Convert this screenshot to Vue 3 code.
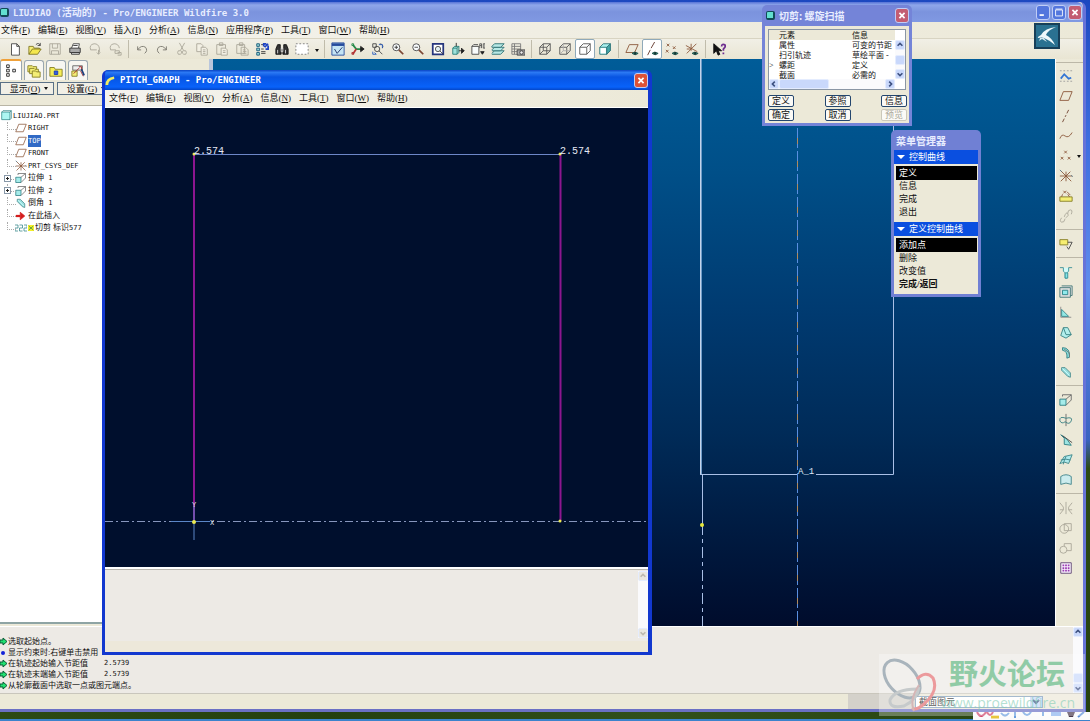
<template>
  <div class="desktop">
    <main class="app-window">
      <header class="titlebar">
        <i class="cube"></i>
        <h1 class="title">
          <span class="latin">LIUJIAO (</span>活动的<span class="latin">) - Pro/ENGINEER Wildfire 3.0</span>
        </h1>
        <button class="win-btn" aria-label="最小化">
          <svg viewBox="0 0 14 14"><path d="M3 10h5" stroke="#fff" stroke-width="2" /></svg>
        </button>
        <button class="win-btn" aria-label="最大化">
          <svg viewBox="0 0 14 14"><path d="M3 4h8v7H3zM3 3h8" fill="none" stroke="#fff" /></svg>
        </button>
        <button class="win-btn close" aria-label="关闭">
          <svg viewBox="0 0 14 14"><path d="M4 4l6 6M10 4l-6 6" stroke="#fff" stroke-width="2" /></svg>
        </button>
      </header>

      <nav class="menubar">
        <button v-for="m in mainMenu" :key="m[0]">{{ m[0] }}(<u>{{ m[1] }}</u>)</button>
      </nav>

      <div class="toolbar">
        <template v-for="(name, i) in topTools" :key="'t' + i">
          <i v-if="name === '|'" class="vsep"></i>
          <button v-else-if="name === 'v'" class="drop" aria-label="更多"></button>
          <button v-else class="tool" :class="{ pressed: pressed.includes(name) }" :aria-label="name">
            <svg viewBox="0 0 16 16" v-html="icons[name]"></svg>
          </button>
        </template>
      </div>

      <!-- 右上角标志 -->
      <svg class="bird" viewBox="0 0 26 26">
        <rect x="1" y="1" width="24" height="24" fill="#2a7191" stroke="#173f59" stroke-width="2" />
        <path d="M22 4Q11 5 7 12Q3 14 4 15Q8 14 10 15Q15 17 21 22Q18 15 12 12Q14 7 22 4Z" fill="#eef8fb" />
        <path d="M6 15l-1 3 3-2 5 3-3-4Z" fill="#d4e8ee" />
      </svg>

      <div class="body">
        <aside class="navigator">
          <div class="tabs">
            <button v-for="(t, i) in ['treeTab', 'folders', 'favorite', 'connect']" :key="t" :class="{ active: i === 0 }" :aria-label="t">
              <svg viewBox="0 0 16 16" v-html="icons[t]"></svg>
            </button>
          </div>
          <div class="tree-actions">
            <button><span>显示(<u>O</u>)</span><i class="tri"></i></button>
            <button><span>设置(<u>G</u>)</span><i class="tri"></i></button>
          </div>
          <ul class="tree">
            <li v-for="(n, i) in tree" :key="i" :class="{ root: i === 0, sel: n.sel }">
              <i v-if="n.plus" class="plus"></i>
              <svg viewBox="0 0 16 16" v-html="icons[n.icon]"></svg>
              <svg v-if="n.mark" class="mark" viewBox="0 0 8 8"><path d="M0 0h8v8H0z" fill="#f4ef28" /><path d="M1 1l6 6M7 1L1 7M2 4h4" stroke="#594" /></svg>
              <span class="label">{{ n.cjk }}<span class="latin">{{ n.text }}</span></span>
            </li>
          </ul>
        </aside>

        <section class="viewport">
          <svg class="scene">
            <g stroke="#a9bfe6" fill="none">
              <path d="M488 0V415" stroke="#6f9cc8" stroke-width="2" />
              <path d="M487.500 0V415" stroke="#c3d3ea" />
              <path d="M487 415.500H584M603 415.500H680.500V0" />
              <path d="M489.500 416V476" />
              <path d="M489.500 480V567" stroke-dasharray="4 4 11 4" />
            </g>
            <path d="M584.500 0V567" stroke="#5a8fe0" stroke-dasharray="20 3" />
            <path d="M584.500 10V567" stroke="#b08a5c" stroke-dasharray="6 17" />
            <circle cx="489" cy="466" r="2" fill="#e6e83c" />
            <text x="585" y="415" class="scene-text">A_1</text>
          </svg>
        </section>

        <div class="side-tools">
          <template v-for="(name, i) in sideTools" :key="'s' + i">
            <i v-if="name === '|'" class="hsep"></i>
            <button v-else class="tool" :aria-label="name">
              <svg viewBox="0 0 16 16" v-html="icons[name]"></svg>
              <i v-if="name === 'points'" class="tri small"></i>
            </button>
          </template>
        </div>
      </div>

      <section class="messages">
        <ul>
          <li v-for="(m, i) in messages" :key="i">
            <svg v-if="m.kind === 'arrow'" viewBox="0 0 8 9"><path d="M0 3h3V1l4 3.500L3 8V6H0z" fill="#20e070" stroke="#075c34" /></svg>
            <svg v-else viewBox="0 0 8 9"><circle cx="3" cy="5" r="2" fill="#1222d8" /></svg>
            <span>{{ m.text }}</span><span v-if="m.value" class="latin value">{{ m.value }}</span>
          </li>
        </ul>
        <div class="scroll-v">
          <button aria-label="上"><svg viewBox="0 0 10 10"><path d="M2 6l3-3 3 3" /></svg></button>
          <i class="thumb"></i>
          <button aria-label="下"><svg viewBox="0 0 10 10"><path d="M2 4l3 3 3-3" /></svg></button>
        </div>
      </section>

      <footer class="status">
        <i class="status-box"></i>
        <label class="filter">
          <select aria-label="过滤器"><option>截面图元</option></select>
          <svg viewBox="0 0 12 10"><path d="M3 3l3 3 3-3" /></svg>
        </label>
      </footer>
    </main>

    <!-- 螺距图窗口 -->
    <section class="graph-window">
      <header>
        <svg class="arc" viewBox="0 0 12 12"><path d="M2 11Q2 4 10 3" fill="none" stroke="#f4ec62" stroke-width="3" /></svg>
        <h2 class="latin">PITCH_GRAPH - Pro/ENGINEER</h2>
        <button class="win-btn close" aria-label="关闭">
          <svg viewBox="0 0 14 14"><path d="M4 4l6 6M10 4l-6 6" stroke="#fff" stroke-width="2" /></svg>
        </button>
      </header>
      <nav class="menubar">
        <button v-for="m in graphMenu" :key="m[0]">{{ m[0] }}(<u>{{ m[1] }}</u>)</button>
      </nav>
      <svg class="graph">
        <path d="M0 413.500H543" stroke="#8796bd" stroke-dasharray="8 3 2 3" />
        <path d="M89 46.500H455" stroke="#6d87c8" />
        <path d="M89 46V413M455.500 46V413" stroke="#8c1690" stroke-width="2" />
        <path d="M89 398V432M66 413.500H105" stroke="#5a86c8" />
        <g fill="#eaea50">
          <circle cx="89" cy="46" r="1.500" /><circle cx="455" cy="46" r="1.500" />
          <circle cx="89" cy="414" r="2" /><circle cx="455" cy="413" r="1.500" />
        </g>
        <text x="89" y="46">2.574</text>
        <text x="455" y="46">2.574</text>
        <text x="105" y="417" class="axis">X</text>
        <text x="87" y="399" class="axis">Y</text>
      </svg>
      <div class="graph-log">
        <div class="scroll-v off">
          <button disabled aria-label="上"><svg viewBox="0 0 10 10"><path d="M2 6l3-3 3 3" /></svg></button>
          <button disabled aria-label="下"><svg viewBox="0 0 10 10"><path d="M2 4l3 3 3-3" /></svg></button>
        </div>
      </div>
      <div class="graph-foot"></div>
    </section>

    <!-- 切剪对话框 -->
    <section class="dialog">
      <header>
        <i class="cube"></i>
        <h2>切剪: 螺旋扫描</h2>
        <button class="win-btn close" aria-label="关闭">
          <svg viewBox="0 0 14 14"><path d="M4 4l6 6M10 4l-6 6" stroke="#fff" stroke-width="2" /></svg>
        </button>
      </header>
      <div class="dialog-body">
        <div class="list">
          <table>
            <thead><tr><th></th><th>元素</th><th>信息</th></tr></thead>
            <tbody>
              <tr v-for="e in elements" :key="e[0]">
                <td>{{ e[2] }}</td><td>{{ e[0] }}</td><td>{{ e[1] }}</td>
              </tr>
            </tbody>
          </table>
          <div class="scroll-v">
            <button aria-label="上"><svg viewBox="0 0 10 10"><path d="M2 6l3-3 3 3" /></svg></button>
            <i class="thumb"></i>
            <button aria-label="下"><svg viewBox="0 0 10 10"><path d="M2 4l3 3 3-3" /></svg></button>
          </div>
          <div class="scroll-h">
            <button aria-label="左"><svg viewBox="0 0 10 10"><path d="M6 2L3 5l3 3" /></svg></button>
            <i class="thumb"></i>
            <button aria-label="右"><svg viewBox="0 0 10 10"><path d="M4 2l3 3-3 3" /></svg></button>
          </div>
        </div>
        <div class="dialog-btns">
          <button v-for="b in ['定义', '参照', '信息', '确定', '取消', '预览']" :key="b" :disabled="b === '预览'">{{ b }}</button>
        </div>
      </div>
    </section>

    <!-- 菜单管理器 -->
    <section class="menu-manager">
      <h2>菜单管理器</h2>
      <div v-for="g in managerGroups" :key="g.title" class="group">
        <h3><i></i>{{ g.title }}</h3>
        <button v-for="(item, i) in g.items" :key="item" :class="{ on: i === 0, strong: item === '完成/返回' }">{{ item }}</button>
      </div>
    </section>

    <div class="tray">
      <svg viewBox="0 0 116 8">
        <path d="M4 0q4 8 9 0M14 0q3 6 6 0" fill="none" stroke="#d0486c" stroke-width="2" />
        <path d="M18 5h8" stroke="#e8c63c" stroke-width="3" />
        <path d="M28 1q4 5 8 0M42 0v6M50 0q4 6 8 0M70 0v4" fill="none" stroke="#6b9fdf" stroke-width="2" />
        <path d="M78 0h10v4H78z" fill="#8bb4ee" />
        <path d="M94 0h8l-2 5h-4z" fill="#4b3a4b" />
        <path d="M105 5l6-5" stroke="#5b8ed8" stroke-width="2" />
      </svg>
    </div>

    <div class="watermark">
      <svg viewBox="0 0 60 56">
        <g fill="none">
          <ellipse cx="23" cy="22" rx="14" ry="22" transform="rotate(-42 23 22)" stroke="#a9b4bc" stroke-width="3" />
          <path d="M38 22Q47 13 54 21Q60 34 45 47Q37 54 33 51" stroke="#ec9a9c" stroke-width="3" />
          <path d="M38 32Q16 32 11 43Q10 52 25 49Q38 43 40 30" stroke="#c6cacb" stroke-width="3" />
          <path d="M40 28Q30 43 35 54" stroke="#d5b6b6" stroke-width="2" />
        </g>
      </svg>
      <div class="wm-text">
        <strong>野火论坛</strong>
        <span>www.proewildfire.cn</span>
      </div>
    </div>
  </div>
</template>

<script setup>
const mainMenu = [
  ['文件', 'F'], ['编辑', 'E'], ['视图', 'V'], ['插入', 'I'], ['分析', 'A'],
  ['信息', 'N'], ['应用程序', 'P'], ['工具', 'T'], ['窗口', 'W'], ['帮助', 'H'],
]
const graphMenu = [
  ['文件', 'F'], ['编辑', 'E'], ['视图', 'V'], ['分析', 'A'],
  ['信息', 'N'], ['工具', 'T'], ['窗口', 'W'], ['帮助', 'H'],
]

const topTools = [
  'new', 'open', 'save', 'print', 'mail', 'mailLink', '|',
  'undo', 'redo', 'cut', 'copy', 'paste', 'pasteSpecial', 'regen', 'find', 'select', 'v', '|',
  'repaint', 'spin', 'orient', 'zoomIn', 'zoomOut', 'refit', 'reorient', 'views', 'layers', 'viewMgr', '|',
  'wire', 'hidden', 'noHidden', 'shade', '|',
  'planeEye', 'axisEye', 'pointEye', 'csysEye', '|', 'help',
]
const pressed = ['noHidden', 'axisEye']

const sideTools = [
  'sketch', 'plane', 'axis', 'curve', 'points', 'csys', 'analysis', 'link', '|',
  'note', '|',
  'hole', 'shell', 'rib', 'draft', 'round', 'chamfer', '|',
  'extrude', 'revolve', 'sweep', 'blend', 'style', '|',
  'mirror', 'merge', 'trim', 'pattern',
]

const tree = [
  { icon: 'part', text: 'LIUJIAO.PRT' },
  { icon: 'plane', text: 'RIGHT' },
  { icon: 'plane', text: 'TOP', sel: true },
  { icon: 'plane', text: 'FRONT' },
  { icon: 'csys', text: 'PRT_CSYS_DEF' },
  { icon: 'extrude', cjk: '拉伸', text: ' 1', plus: true },
  { icon: 'extrude', cjk: '拉伸', text: ' 2', plus: true },
  { icon: 'chamfer', cjk: '倒角', text: ' 1' },
  { icon: 'insert', cjk: '在此插入' },
  { icon: 'helix', cjk: '切剪 标识', text: '577', mark: true },
]

const messages = [
  { kind: 'arrow', text: '选取起始点。' },
  { kind: 'dot', text: '显示约束时:右键单击禁用' },
  { kind: 'arrow', text: '在轨迹起始输入节距值', value: '2.5739' },
  { kind: 'arrow', text: '在轨迹末端输入节距值', value: '2.5739' },
  { kind: 'arrow', text: '从轮廓截面中选取一点或图元端点。' },
]

const elements = [
  ['属性', '可变的节距', ''],
  ['扫引轨迹', '草绘平面 -', ''],
  ['螺距', '定义', '>'],
  ['截面', '必需的', ''],
]

const managerGroups = [
  { title: '控制曲线', items: ['定义', '信息', '完成', '退出'] },
  { title: '定义控制曲线', items: ['添加点', '删除', '改变值', '完成/返回'] },
]

// 小工具: 描边路径
const p = (d, stroke = '#333', fill = 'none', w = 1) =>
  `<path d="${d}" stroke="${stroke}" fill="${fill}" stroke-width="${w}"/>`

const eye = p('M8 13q3-3 7 0q-3 3-7 0z', '#24524c', '#3f8a80') + p('M11 12h1v2h-1z', '#12302c')
const cubeLines = 'M2 6h8v8H2zM2 6l4-4h8v8l-4 4M10 6l4-4'
const brown = '#8a5638'
const gray = '#a9a698'

// 16x16 图标
const icons = {
  new: p('M4 2h6l3 3v10H4zM10 2v3h3', '#444', '#fff'),
  open: p('M1 14V5h5l1 2h6v2', '#7d7420', '#f6ee76') + p('M1 14l4-6h10l-4 6z', '#7d7420', '#f4e74c') + p('M9 3q3-3 5 1M14 1v3h-3', '#444'),
  save: p('M2 2h12v12H2zM5 2v5h6V2M4 14v-4h8v4', gray),
  print: p('M4 7l2-5h7l-1 5', '#444', '#fff') + p('M2 7h12v5H2z', '#333', '#aaa') + p('M4 12h9v2H4zM6 4h5', '#333', '#ddd'),
  mail: p('M3 9Q1 3 7 2q5 0 6 5v5M3 9h7M12 9v5l2-2M10 12l2 2', gray),
  mailLink: p('M3 9Q1 3 7 2q5 0 6 5M3 9h6M8 10h5v3H8zM11 12h4v3h-4', gray),
  undo: p('M3 5v4h4M3 9q4-6 9-3q3 4-1 7', '#77756c'),
  redo: p('M13 5v4H9M13 9Q9 3 4 6q-3 4 1 7', '#77756c'),
  cut: p('M5 1l5 9M11 1L6 10M6 10q-3-1-3 2t3 2t1-4M10 10q3-1 3 2t-3 2t-1-4', gray),
  copy: p('M2 2h5l2 2v7H2z', gray, '#f3f0e4') + p('M7 6h5l2 2v7H7zM9 9h3M9 11h3M9 13h3', gray, '#f3f0e4'),
  paste: p('M2 3h10v11H2zM5 1h4v3H5z', gray) + p('M7 7h5l2 2v6H7zM9 10h3M9 12h3', gray, '#f3f0e4'),
  pasteSpecial: p('M2 3h9v10H2zM5 1h4v3H5zM7 6h5l3 3v6H7z', gray) + p('M9 9h3M9 11h4M9 13h4', gray),
  regen: p('M2 2h3v3H2zM2 7h3v3H2zM2 12h3v3H2z', '#157', '#9fe0dc') + p('M7 3h3M7 8h3M7 13h5M7 11h5', '#333') + p('M10 5V2h3M15 4v4h-3M11 6l4-4', '#1d43c4', 'none', 2),
  find: p('M3 3h3v4l1 1v6H1V8zM10 3h3l2 5v6H9V8l1-1z', '#111', '#333') + p('M7 7h2v4H7zM3 9v4M12 9v4', '#ddd'),
  select: '<path d="M1 2h14v12H1z" fill="#fff" stroke="#777" stroke-dasharray="2 2"/>',
  repaint: p('M1 1h14v14H1z', '#254a9c', '#c4e4f4', 1) + p('M1 3h14', '#254a9c', 'none', 3) + p('M4 8l3 5 6-7', '#1b2b66', 'none', 1),
  spin: p('M2 3l4 5h6', '#258a48', 'none', 2) + p('M2 14l4-6', '#b33', 'none', 2) + p('M11 5l4 3-4 3z', '#222', '#222') + p('M1 2h2v2H1z', '#258a48') + p('M1 12h2v2H1z', '#a33'),
  orient: p('M2 2h4v4H2zM10 2q5 1 3 5M4 8a3 3 0 1 0 6 0a3 3 0 1 0-6 0M9 10l4 4', '#444') + p('M9 3h4v4M2 11v3h4M4 12l2 2', '#2357bd', 'none', 1),
  zoomIn: p('M2 6a4 4 0 1 0 8 0a4 4 0 1 0-8 0', '#444', '#f8fbfd') + p('M4 6h4M6 4v4', '#333') + p('M9 9l5 5', '#7b4634', 'none', 2),
  zoomOut: p('M2 6a4 4 0 1 0 8 0a4 4 0 1 0-8 0M4 6h4', '#444', '#f8fbfd') + p('M9 9l5 5', '#7b4634', 'none', 2),
  refit: p('M2 2h12v12H2z', '#26357c', '#fff', 2) + p('M5 8a3 3 0 1 0 6 0a3 3 0 1 0-6 0M10 10l4 4', '#444', '#e1eef2'),
  reorient: p('M2 7h5v7H2zM2 7l2-2h5l-2 2M7 14l2-2V5', '#267a76', '#9de3dc') + p('M6 1v4M9 10h6', '#222') + p('M12 7l3 3-3 3z', '#222', '#222'),
  views: p('M1 5h8v9H1zM1 5l2-2h5', '#444', '#f8fbfb') + p('M10 7V2h2v5M10 4h2M14 2v5M14 2h2v5h-2', '#555') + p('M11 11l2 3 2-3z', '#222', '#222'),
  layers: p('M1 13l3-3h11l-4 4H1', '#276d70', '#b8e9e6') + p('M1 9l3-3h11l-4 4H1', '#276d70', '#b8e9e6') + p('M1 5l3-3h11l-4 4H1z', '#276d70', '#b8e9e6'),
  viewMgr: p('M1 2h10v12H1zM1 5h10M4 2v12M1 8h10M1 11h10', '#777') + p('M7 9h9v6H7z', '#444', '#aaa') + p('M10 12a2 2 0 1 0 4 0a2 2 0 1 0-4 0', '#333', '#eee'),
  wire: p(cubeLines + 'M6 2v8h8M6 10l-4 4', '#555'),
  hidden: p(cubeLines, '#555') + p('M6 2v8h8M6 10l-4 4', '#aaa'),
  noHidden: p(cubeLines, '#555', '#fff'),
  shade: p(cubeLines, '#2f7478', '#a9f0ee') + p('M3 7h6v6H3z', 'none', '#fff') + p('M10 6l4-4v8l-4 4z', '#2f7478', '#42a6a8'),
  planeEye: p('M1 12L5 3h10l-4 9z', brown) + eye,
  axisEye: p('M3 15l3-6M7 7l4-7', '#5c2f22', 'none', 1) + eye,
  pointEye: p('M2 2l3 3M5 2L2 5M1 9l3 3M4 9l-3 3M9 5l3 3M12 5L9 8', brown) + eye,
  csysEye: p('M1 4l13 7M13 2L2 13M7 8L2 8M7 2v8', brown) + eye,
  help: p('M2 2v11l3-3 2 5 2-1-2-4h4z', '#111', '#111') + p('M11 5q0-3 3-2t-1 5v2M13 12v2', '#6e2e8f', 'none', 2),

  treeTab: p('M3 1h3v3H3zM3 6h3v3H3zM3 11h3v3H3zM10 6h3v3h-3z', '#222', '#fff'),
  folders: p('M1 2h5l1 1h4v6H1z', '#837b22', '#f4ee75') + p('M3 5h5l1 1h4v5H3z', '#837b22', '#f4ee75') + p('M6 8h4l1 1h4v6H6z', '#837b22', '#f4ee75'),
  favorite: p('M1 4h5l1 2h8v8H1z', '#837b22', '#f5ee59') + p('M6 8h4v4H6z', '#1b3bb4', '#3560df'),
  connect: p('M2 2h11v5H2z', '#666', '#eee') + p('M1 8h6v6H1z', '#837b22', '#f4ee75') + p('M3 11l7-7M9 3h3v4M11 8l3 6', '#a3282c', 'none', 1) + p('M12 6l3 7', '#1c3f7c', 'none', 2),

  part: p('M1 3h12v11H1z', '#207a7d', '#adf6f2', 1) + p('M1 3l2-2h12v11l-2 2M13 3l2-2', '#207a7d'),
  insert: p('M1 8h6', '#d41c1c', 'none', 3) + p('M7 3l6 5-6 5z', '#d41c1c', '#d41c1c'),
  helix: p('M0 4h4v4H0v4h4M6 4h4v4H6v4h4M12 4h4v4h-4v4h4', '#34868a'),
  sketch: '<path d="M1 2h14M1 14h14" stroke="#999" stroke-dasharray="2 2"/>' + p('M2 11l4-5 5 5 3-1', '#3375d5', 'none', 2),
  plane: p('M1 13L5 3h10l-4 10z', brown, 'none', 1),
  axis: p('M4 15l2-4M7 9l1-2M9 5l2-4', '#6c3d2a', 'none', 1),
  curve: p('M1 11q2-6 6-3t8-4', brown, 'none', 1),
  points: p('M6 2l3 3M9 2L6 5M2 9l3 3M5 9l-3 3M10 9l3 3M13 9l-3 3', brown),
  csys: p('M2 2l12 12M13 3L2 14M1 8h14M8 3v11', brown) + p('M1 1l2 2M14 7l2 2', '#578'),
  analysis: p('M5 2l3 3M8 2L5 5M9 3l4 4', brown) + p('M1 9h14v5H1z', '#837b22', '#f4ee75') + p('M4 6l-1 3M10 6l2 3', brown),
  link: p('M3 10q-3 4 0 5t4-4M6 9q2-6 4-4t-2 5M10 5q0-4 3-4t1 5', gray, 'none', 1),
  note: p('M1 3h9v6H1z', '#837b22', '#f6ee70') + p('M10 6h5l-4 8M11 14l-2-3', '#444'),
  hole: p('M1 3h4v4l2 2v6h2V9l2-2V3h4', '#358f96', '#d0fbfb') + p('M7 9h3v6H7z', '#358f96', '#84e5e8'),
  shell: p('M1 3h12v11H1zM3 1h12v11h-2', '#477', '#ddd') + p('M4 6h6v5H4z', '#268087', '#8feaec'),
  rib: p('M2 2v12h12', '#888') + p('M3 5l8 8H3z', '#338288', '#94e8e5'),
  draft: p('M2 12l3-9h5l4 8-6 4z', '#337f80', '#b2eeec') + p('M5 3l3 8 6 0', '#337f80'),
  round: p('M4 3q9 0 8 11l-3 1Q10 7 4 6z', '#357f82', '#83dbda') + p('M6 5q7 3 6 9', '#777'),
  chamfer: p('M3 3h4l6 6v5l-3-1L3 6z', '#47898b', '#98dddd') + p('M4 4l8 8', '#cff'),
  extrude: p('M1 7h7v7H1z', '#287b80', '#a5ecea') + p('M8 7l6-5v6l-6 6M4 4V2h10', '#666'),
  revolve: p('M8 1v14', '#666') + p('M8 6Q0 3 1 9q2 4 6 1M8 6q8-2 6 3t-7 1', '#347e80', 'none', 1),
  sweep: p('M2 2l4 4v7l8 1-5-7-7-5z', '#287b80', '#9ce4e2') + p('M4 3l11 8', '#444'),
  blend: p('M1 12l5-8 9-2-4 10q-4-3-10 0z', '#388487', '#afeaec') + p('M8 4q-3 6-3 9M2 8q6-2 11 0', '#388487'),
  style: p('M2 13V4q6-4 12 0v9q-6-3-12 0z', '#398088', '#ccecee'),
  mirror: p('M8 1v14M1 2l4 5v3l-4 5M15 2l-4 5v3l4 5M1 10h4M11 10h4', gray),
  merge: p('M1 9a5 5 0 1 0 10 0a5 5 0 1 0-10 0M6 3h8v8H6z', gray),
  trim: p('M6 3h8v8H6z', gray) + p('M1 10a4 4 0 1 0 8 0a4 4 0 1 0-8 0', gray, '#ece9d8'),
  pattern: p('M2 2h12v12H2z', '#5c4270', '#faf3ff', 1) + '<path d="M4 5h9M4 8h9M4 11h9" stroke="#9a3db1" stroke-width="2" stroke-dasharray="2 1"/>',
}
</script>

<style>
body {
  margin: 0;
  overflow: hidden;
}
</style>

<style scoped>
* {
  box-sizing: border-box;
}

h1, h2, h3, ul {
  margin: 0;
  padding: 0;
  list-style: none;
}

button, select {
  font: inherit;
  color: inherit;
  background: none;
  border: 0;
  padding: 0;
  margin: 0;
  white-space: nowrap;
}

svg {
  display: block;
  flex: none;
}

.desktop {
  position: relative;
  height: 100vh;
  padding: 2px 4px 9px 0;
  color: #111;
  font: 9px/12px "Liberation Serif", "Noto Sans CJK SC", sans-serif;
  background:
    linear-gradient(#3b83cc, #3b83cc) bottom / 100% 2px no-repeat,
    linear-gradient(90deg, #2c4a14, #24400f 30%, #31501b 60%, #27430f) bottom / 100% 9px no-repeat,
    linear-gradient(#1c48c0, #3f6fe0 20%, #5f8cec 40%, #3a62c0 61%, #2c4a14 65%, #24400f);
}

.latin {
  font-family: "DejaVu Sans Mono", monospace;
}

/* ---- 主窗口 ---- */
.app-window {
  position: relative;
  display: flex;
  flex-direction: column;
  height: 100%;
  background: #ece9d8;
  border-right: 3px solid #6673d8;
  border-bottom: 3px solid #6a70c4;
  border-radius: 0 6px 0 0;
}

.titlebar {
  display: flex;
  align-items: center;
  gap: 2px;
  height: 20px;
  padding-right: 1px;
  color: #e8edff;
  background: linear-gradient(#5673d6, #8ea6ea 15%, #7b93dd 50%, #8099e2);
  border-radius: 0 6px 0 0;
}

.title {
  flex: 1;
  margin-left: 2px;
  font: bold 10px/14px "Noto Sans CJK SC", sans-serif;
  white-space: nowrap;
}

.title .latin {
  font-size: 9px;
}

.cube {
  width: 9px;
  height: 9px;
  background: #62dfd0;
  border: 1px solid #124a58;
  border-width: 1px 2px 2px 1px;
  border-radius: 2px;
}

.win-btn {
  width: 14px;
  height: 15px;
  background: #5376dd;
  border: 1px solid #c0cdf6;
  border-radius: 3px;
}

.win-btn svg {
  width: 12px;
  height: 13px;
}

.win-btn.close {
  background: #c35d72;
}

.menubar {
  display: flex;
  align-items: center;
  gap: 8px;
  height: 16px;
  padding-left: 1px;
  font-family: "Liberation Serif", "Noto Sans CJK SC", serif;
  background: linear-gradient(90deg, #f4f3ee, #ece9d8);
}

.toolbar {
  display: flex;
  align-items: center;
  height: 21px;
  padding-left: 5px;
  border-top: 1px solid #d8d4c2;
  background: linear-gradient(#f1efe6, #e9e5d3);
}

.tool {
  display: flex;
  align-items: center;
  justify-content: center;
  width: 20px;
  height: 20px;
}

.tool svg {
  width: 14px;
  height: 14px;
}

.tool.pressed {
  background: #fff;
  border: 1px solid #8fa9b9;
  border-radius: 2px;
}

.vsep {
  width: 7px;
  height: 18px;
  background: linear-gradient(90deg, transparent 3px, #c0bcab 3px, #c0bcab 4px, transparent 4px);
}

.drop {
  width: 9px;
  height: 20px;
}

.drop::after, .tri {
  content: "";
  display: inline-block;
  border: 2px solid transparent;
  border-top: 3px solid #111;
  border-bottom: 0;
}

.bird {
  position: absolute;
  top: 21px;
  right: 23px;
  width: 26px;
  height: 26px;
}

.body {
  display: flex;
  flex: 1;
  min-height: 0;
}

/* ---- 导航器 ---- */
.navigator {
  display: flex;
  flex-direction: column;
  width: 213px;
  border-right: 4px solid #b9c6dc;
  border-bottom: 2px solid #8ea4a4;
  margin-bottom: 2px;
}

.tabs {
  display: flex;
  gap: 2px;
  height: 21px;
}

.tabs button {
  display: flex;
  align-items: center;
  justify-content: center;
  width: 20px;
  height: 20px;
  margin-top: 1px;
  background: #f7f6f1;
  border: 1px solid #9aa7b0;
  border-bottom: 0;
  border-radius: 3px 3px 0 0;
}

.tabs button.active {
  width: 22px;
  height: 21px;
  margin-top: 0;
  background: #fff;
  border-top: 2px solid #efa039;
}

.tabs svg {
  width: 14px;
  height: 14px;
}

.tree-actions {
  display: flex;
  gap: 3px;
  padding-top: 2px;
  height: 26px;
  border-bottom: 1px solid #b9b5a5;
}

.tree-actions button {
  display: flex;
  align-items: center;
  justify-content: center;
  gap: 4px;
  width: 54px;
  height: 13px;
  padding-left: 4px;
  background: #f1efe6;
  border: 1px solid #5a7187;
}

.tree {
  flex: 1;
  padding: 3px 0 0;
  font-size: 8px;
  background: #fff;
}

.tree li {
  position: relative;
  display: flex;
  align-items: center;
  gap: 1px;
  height: 12px;
  padding-left: 15px;
  white-space: pre;
}

.tree li:nth-child(odd) {
  height: 13px;
}

.tree li.root {
  padding-left: 1px;
}

.tree li:not(.root)::before {
  content: "";
  position: absolute;
  left: 7px;
  top: 0;
  width: 8px;
  height: 7px;
  border-left: 1px dotted #aaa;
  border-bottom: 1px dotted #aaa;
}

.tree svg {
  width: 12px;
  height: 12px;
}

.tree .root svg {
  width: 11px;
  height: 11px;
}

.tree svg.mark {
  width: 6px;
  height: 6px;
}

.tree .latin {
  font-size: 7px;
}

.tree .sel .label {
  color: #fff;
  line-height: 11px;
  background: #316ac5;
}

.plus {
  position: absolute;
  left: 4px;
  top: 3px;
  width: 7px;
  height: 7px;
  border: 1px solid #8898a8;
  background: linear-gradient(#222, #222) center / 3px 1px no-repeat, linear-gradient(#222, #222) center / 1px 3px no-repeat, #fff;
}

/* ---- 图形区 ---- */
.viewport {
  flex: 1;
  background: linear-gradient(#005c98, #004f88 20%, #003a70 45%, #002b58 66%, #001a40 84%, #000c2c);
}

.scene {
  width: 100%;
  height: 100%;
}

.scene-text {
  font: 9px "Liberation Mono", monospace;
  fill: #dfe8f6;
}

.side-tools {
  width: 28px;
  padding-top: 7px;
  border-left: 1px solid #fff;
  background: linear-gradient(#bbb7a7, #bbb7a7) 0 3px / 100% 1px no-repeat;
}

.side-tools .tool {
  position: relative;
}

.side-tools .tri.small {
  position: absolute;
  left: 21px;
  top: 9px;
}

.hsep {
  display: block;
  height: 8px;
  background: linear-gradient(#bbb7a7, #bbb7a7) 0 3px / 100% 1px no-repeat;
}

/* ---- 消息区 ---- */
.messages {
  display: flex;
  justify-content: space-between;
  height: 67px;
  background: #edeae5;
  border-top: 1px solid #fff;
  font-size: 8px;
}

.messages ul {
  padding-top: 9px;
}

.messages li {
  display: flex;
  align-items: center;
  height: 11px;
  line-height: 11px;
}

.messages li svg {
  width: 8px;
  height: 9px;
}

.messages .value {
  margin-left: 16px;
  font-size: 7px;
}

.scroll-v, .scroll-h {
  display: flex;
  justify-content: space-between;
  background: #fafafc;
}

.scroll-v {
  flex-direction: column;
  width: 10px;
}

.scroll-v button, .scroll-h button, .thumb {
  width: 10px;
  height: 10px;
  background: #c9d8fb;
  border: 1px solid #e4ecfe;
  border-radius: 2px;
}

.scroll-v svg, .scroll-h svg, .filter svg {
  width: 8px;
  height: 8px;
  fill: none;
  stroke: #3c5080;
  stroke-width: 2;
}

.scroll-v .thumb {
  margin-top: auto;
}

.scroll-v.off button {
  background: #e9e7e0;
}

.scroll-v.off svg {
  stroke: #bcb8ae;
}

.status {
  display: flex;
  align-items: center;
  justify-content: flex-end;
  height: 16px;
  padding-right: 40px;
  border-top: 1px solid #c9c6bc;
}

.status-box {
  width: 67px;
  height: 15px;
  background: #d4d1ca;
}

.filter {
  display: flex;
  align-items: center;
  width: 128px;
  height: 12px;
  background: #fff;
  border: 1px solid #7f9db9;
}

.filter select {
  flex: 1;
  height: 10px;
  padding-left: 3px;
  appearance: none;
  line-height: 10px;
}

.filter svg {
  width: 12px;
  height: 10px;
  background: #c9d8fb;
}

/* ---- 螺距图窗口 ---- */
.graph-window {
  position: absolute;
  left: 102px;
  top: 70px;
  display: flex;
  flex-direction: column;
  width: 550px;
  border: 3px solid #1238cf;
  border-top: 0;
  border-right-width: 4px;
  border-radius: 6px 6px 0 0;
  background: #1238cf;
}

.graph-window header {
  display: flex;
  align-items: center;
  gap: 2px;
  height: 20px;
  color: #fff;
  background: linear-gradient(#0a43c4, #2b79f4 12%, #0754e2 35%, #0862fa 85%, #0446c8);
  border-radius: 4px 4px 0 0;
}

.graph-window h2 {
  flex: 1;
  margin-left: 2px;
  font-size: 9px;
  line-height: 14px;
}

.graph-window .arc {
  width: 11px;
  height: 11px;
}

.graph-window .win-btn.close {
  background: #de5236;
}

.graph-window .menubar {
  height: 18px;
  padding: 0 0 2px 4px;
  border-bottom: 1px solid #fff;
}

.graph {
  width: 100%;
  height: 459px;
  background: #000f2d;
}

.graph text {
  font: 10px "Liberation Mono", monospace;
  fill: #e6e9f4;
}

.graph text.axis {
  font-size: 7px;
}

.graph-log {
  display: flex;
  justify-content: flex-end;
  height: 74px;
  padding: 2px 0 3px;
  border-top: 2px solid #fff;
  background: linear-gradient(#b9b6ae, #b9b6ae) top / 100% 1px no-repeat, #edeae5;
}

.graph-foot {
  height: 11px;
  background: #ede8da;
}

/* ---- 切剪对话框 ---- */
.dialog {
  position: absolute;
  right: 178px;
  top: 5px;
  width: 150px;
  padding: 0 3px 3px;
  background: #7484d8;
  border-radius: 5px 5px 0 0;
}

.dialog header {
  display: flex;
  align-items: center;
  gap: 4px;
  height: 21px;
  padding-left: 1px;
  color: #e8edff;
}

.dialog h2 {
  flex: 1;
  font: bold 10px/14px "Noto Sans CJK SC", sans-serif;
}

.dialog-body {
  padding: 3px 2px 2px 3px;
  background: #ece9d8;
}

.list {
  display: grid;
  grid-template-columns: 1fr 10px;
  grid-template-rows: 49px 10px;
  width: 138px;
  border: 1px solid #8a96a4;
  background: #fff;
}

.list table {
  width: 100%;
  table-layout: fixed;
  border-collapse: collapse;
  font-size: 8px;
  line-height: 10px;
  overflow: hidden;
}

.list th, .list td {
  height: 10px;
  padding: 0;
  font-weight: normal;
  text-align: left;
  white-space: nowrap;
  line-height: 9px;
}

.list th {
  background: #ece9d8;
}

.list th:first-child {
  width: 10px;
}

.list th:nth-child(2) {
  width: 73px;
}

.list .scroll-v {
  margin-top: 10px;
}

.list .scroll-v .thumb {
  margin: auto 0;
}

.list .scroll-h .thumb {
  width: 50px;
  margin-right: auto;
}

.dialog-btns {
  display: grid;
  grid-template-columns: repeat(3, 26px);
  justify-content: space-between;
  gap: 2px;
  padding-top: 5px;
}

.dialog-btns button {
  height: 12px;
  line-height: 10px;
  background: #fbfaf6;
  border: 1px solid #24466e;
  border-radius: 2px;
}

.dialog-btns button:disabled {
  color: #aaa798;
  border-color: #cbc8ba;
}

/* ---- 菜单管理器 ---- */
.menu-manager {
  position: absolute;
  right: 109px;
  top: 130px;
  width: 90px;
  padding: 0 3px 3px;
  background: #7080d4;
  border-radius: 5px 5px 0 0;
}

.menu-manager h2 {
  height: 20px;
  padding-left: 2px;
  color: #e8edff;
  font: bold 10px/21px "Noto Sans CJK SC", sans-serif;
}

.group {
  padding: 0 1px 3px 2px;
  background: #ece9d8;
}

.group h3 {
  display: flex;
  align-items: center;
  gap: 4px;
  height: 14px;
  margin: 0 -1px 2px -2px;
  padding-left: 3px;
  color: #fff;
  font-size: 9px;
  font-weight: normal;
  background: #0a4fe0;
}

.group h3 i {
  border: 4px solid transparent;
  border-top-color: #fff;
  border-bottom: 0;
}

.group button {
  display: block;
  width: 100%;
  height: 13px;
  padding-left: 3px;
  text-align: left;
  line-height: 13px;
}

.group button.on {
  height: 14px;
  color: #fff;
  background: #000;
}

.group button.strong {
  font-weight: bold;
}

/* ---- 托盘与水印 ---- */
.tray {
  position: absolute;
  right: 0;
  bottom: 1px;
  width: 117px;
  height: 8px;
  background: #fbfbfb;
}

.tray svg {
  width: 116px;
  height: 8px;
}

.watermark {
  position: absolute;
  right: 5px;
  bottom: 5px;
  display: flex;
  width: 206px;
  height: 62px;
  background: rgba(255, 255, 255, 0.3);
}

.watermark > svg {
  width: 60px;
  height: 56px;
  margin-top: 3px;
}

.wm-text {
  display: flex;
  flex-direction: column;
  padding-left: 2px;
}

.wm-text strong {
  padding-left: 8px;
  color: #90cba6;
  font: bold 29px/36px "Noto Sans CJK SC", sans-serif;
}

.wm-text span {
  color: rgba(130, 205, 180, 0.6);
  font: 14px/26px "Open Sans", sans-serif;
}
</style>
